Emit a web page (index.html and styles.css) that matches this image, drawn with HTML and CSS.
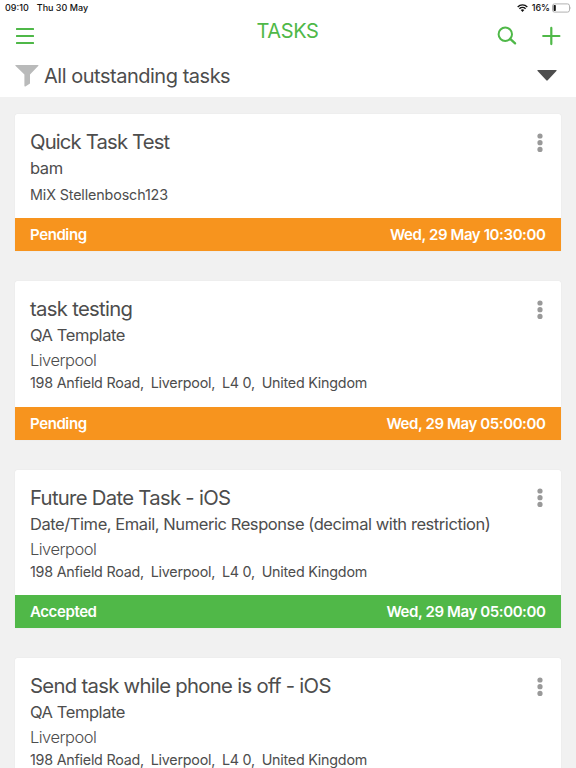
FILE: index.html
```html
<!DOCTYPE html>
<html lang="en">

<head>
  <meta charset="UTF-8" />
  <meta name="viewport" content="width=device-width, initial-scale=1" />
  <title>Tasks</title>
  <link rel="stylesheet" href="styles.css">
</head>

<body>
  <header class="header">
    <div class="status-bar">
      <span class="time">09:10</span>
      <span class="date">Thu 30 May</span>
      <svg class="wifi" width="11" height="8" viewBox="0 0 11 8">
        <path d="M0.7 2.9a6.8 6.8 0 0 1 9.6 0M2.4 4.7a4.4 4.4 0 0 1 6.2 0" fill="none" stroke="#111" stroke-width="1.4" />
        <path d="M5.5 7.9L3.7 6.1a2.6 2.6 0 0 1 3.6 0z" fill="#111" />
      </svg>
      <span class="percent">16%</span>
      <svg class="battery" width="20" height="10" viewBox="0 0 20 10">
        <rect x="0.5" y="0.9" width="17" height="8.2" rx="2" fill="none" stroke="#a8a8a8" stroke-width="0.9" />
        <rect x="1.6" y="2" width="2.2" height="6" rx="0.7" fill="#111" />
        <path d="M18.5 3.6q1.1 1.4 0 2.8z" fill="#a8a8a8" />
      </svg>
    </div>

    <div class="nav-bar">
      <svg class="menu-icon" width="18" height="18" viewBox="0 0 18 18">
        <path d="M0.9 2h16.2M0.9 9h16.2M0.9 16h16.2" stroke="#4fb848" stroke-width="2.2" stroke-linecap="round" />
      </svg>
      <h1 class="nav-title">TASKS</h1>
      <div class="nav-actions">
        <svg width="20" height="20" viewBox="0 0 20 20" fill="none" stroke="#4fb848" stroke-linecap="round">
          <circle cx="8.3" cy="8.2" r="6.7" stroke-width="2" />
          <path d="M13.2 12.8l4.9 4.6" stroke-width="2.3" />
        </svg>
        <svg width="20" height="20" viewBox="0 0 20 20">
          <path d="M10.3 1.9v16.2M2.2 10h16.2" stroke="#4fb848" stroke-width="2.2" stroke-linecap="round" />
        </svg>
      </div>
    </div>

    <div class="filter-bar">
      <svg class="funnel" width="24" height="22" viewBox="0 0 24 22">
        <path d="M0.8 0h22.2q0.8 0 0.4 0.8L15 9.6v8.9l-4.6 2.9q-1 0.4-1-0.7V9.6L0.4 0.8Q0 0 0.8 0z" fill="#b9baba" />
      </svg>
      <span class="filter-name">All outstanding tasks</span>
      <svg class="arrow" width="20" height="11" viewBox="0 0 20 11">
        <path d="M1 0h18q1.1 0 0.4 0.9L10.7 10.3q-0.7 0.7-1.4 0L0.6 0.9Q-0.1 0 1 0z" fill="#4d4d4d" />
      </svg>
    </div>
  </header>

  <main class="task-list">
    <article class="card">
      <div class="card-body">
        <div class="info">
          <h2 class="name">Quick Task Test</h2>
          <div class="template">bam</div>
          <div class="address only">MiX Stellenbosch123</div>
        </div>
        <svg class="more" width="6" height="20" viewBox="0 0 6 20" fill="#999">
          <circle cx="3" cy="3" r="2.6" /><circle cx="3" cy="9.7" r="2.6" /><circle cx="3" cy="16.4" r="2.6" />
        </svg>
      </div>
      <div class="card-status pending">
        <span class="state">Pending</span>
        <span class="due">Wed, 29 May 10:30:00</span>
      </div>
    </article>

    <article class="card">
      <div class="card-body">
        <div class="info">
          <h2 class="name">task testing</h2>
          <div class="template">QA Template</div>
          <div class="place">Liverpool</div>
          <div class="address"><span>198 Anfield Road,</span><span>Liverpool,</span><span>L4 0,</span><span>United Kingdom</span></div>
        </div>
        <svg class="more" width="6" height="20" viewBox="0 0 6 20" fill="#999">
          <circle cx="3" cy="3" r="2.6" /><circle cx="3" cy="9.7" r="2.6" /><circle cx="3" cy="16.4" r="2.6" />
        </svg>
      </div>
      <div class="card-status pending">
        <span class="state">Pending</span>
        <span class="due">Wed, 29 May 05:00:00</span>
      </div>
    </article>

    <article class="card">
      <div class="card-body">
        <div class="info">
          <h2 class="name">Future Date Task - iOS</h2>
          <div class="template">Date/Time, Email, Numeric Response (decimal with restriction)</div>
          <div class="place">Liverpool</div>
          <div class="address"><span>198 Anfield Road,</span><span>Liverpool,</span><span>L4 0,</span><span>United Kingdom</span></div>
        </div>
        <svg class="more" width="6" height="20" viewBox="0 0 6 20" fill="#999">
          <circle cx="3" cy="3" r="2.6" /><circle cx="3" cy="9.7" r="2.6" /><circle cx="3" cy="16.4" r="2.6" />
        </svg>
      </div>
      <div class="card-status accepted">
        <span class="state">Accepted</span>
        <span class="due">Wed, 29 May 05:00:00</span>
      </div>
    </article>

    <article class="card">
      <div class="card-body">
        <div class="info">
          <h2 class="name">Send task while phone is off - iOS</h2>
          <div class="template">QA Template</div>
          <div class="place">Liverpool</div>
          <div class="address"><span>198 Anfield Road,</span><span>Liverpool,</span><span>L4 0,</span><span>United Kingdom</span></div>
        </div>
        <svg class="more" width="6" height="20" viewBox="0 0 6 20" fill="#999">
          <circle cx="3" cy="3" r="2.6" /><circle cx="3" cy="9.7" r="2.6" /><circle cx="3" cy="16.4" r="2.6" />
        </svg>
      </div>
    </article>
  </main>
</body>

</html>
```

FILE: styles.css
```css
* {
  box-sizing: border-box;
}

body {
  margin: 0;
  height: 100vh;
  overflow: hidden;
  display: flex;
  flex-direction: column;
  background-color: #f1f1f1;
  color: #4d4d4d;
  font-family: Inter, "Liberation Sans", sans-serif;
}

h1,
h2 {
  margin: 0;
  font-weight: 400;
}

svg {
  display: block;
  flex: none;
}

.header {
  flex: none;
  height: 97px;
  background-color: #fff;
}

/* status bar */
.status-bar {
  display: flex;
  align-items: center;
  height: 16px;
  padding: 0 4px 0 5px;
  font-size: 9px;
  font-weight: 500;
  line-height: 16px;
  color: #111;
}

.date {
  margin-left: 8px;
}

.wifi {
  margin-left: auto;
}

.percent {
  margin: 0 2px 0 4px;
}

/* nav bar */
.nav-bar {
  display: grid;
  grid-template-columns: 1fr auto 1fr;
  height: 38px;
  padding: 0 15px 0 16px;
}

.menu-icon {
  margin-top: 11px;
}

.nav-title {
  margin-left: -2px;
  font-size: 20px;
  line-height: 31px;
  letter-spacing: -0.4px;
  color: #4fb848;
}

.nav-actions {
  display: flex;
  justify-content: flex-end;
  gap: 24px;
  padding-top: 10px;
}

/* filter */
.filter-bar {
  display: flex;
  align-items: center;
  height: 43px;
  padding: 0 19px 0 15px;
}

.filter-name {
  margin-left: 5px;
  padding-top: 1px;
  font-size: 20px;
  line-height: 43px;
  letter-spacing: -0.48px;
}

.arrow {
  margin-left: auto;
}

/* cards */
.task-list {
  display: flex;
  flex-direction: column;
  gap: 30px;
  padding: 17px 15px 0;
}

.card {
  flex: none;
  background-color: #fff;
  border-radius: 2px 2px 0 0;
  box-shadow: 0 0 1px rgba(0, 0, 0, 0.12);
}

.card-body {
  display: flex;
  justify-content: space-between;
  padding: 14px 18px 12px 15px;
  white-space: nowrap;
}

.name {
  font-size: 20.3px;
  line-height: 27px;
  letter-spacing: -0.7px;
}

.card:first-child .name {
  letter-spacing: -0.85px;
}

.template {
  font-size: 16.5px;
  line-height: 27px;
  letter-spacing: -0.43px;
}

.place {
  font-size: 16.5px;
  font-weight: 300;
  line-height: 22px;
  letter-spacing: -0.52px;
}

.address {
  display: flex;
  gap: 6.8px;
  font-size: 14.3px;
  line-height: 23.4px;
  letter-spacing: -0.23px;
}

.address.only {
  margin-top: 1px;
  letter-spacing: -0.12px;
}

.more {
  margin-top: 4.6px;
}

.card-status {
  display: flex;
  justify-content: space-between;
  height: 33px;
  padding: 0 15.5px 0 15px;
  font-size: 15px;
  font-weight: 600;
  line-height: 33px;
  letter-spacing: -0.4px;
  color: #fff;
}

.pending {
  background-color: #f7941e;
}

.accepted {
  background-color: #50b848;
}
```
